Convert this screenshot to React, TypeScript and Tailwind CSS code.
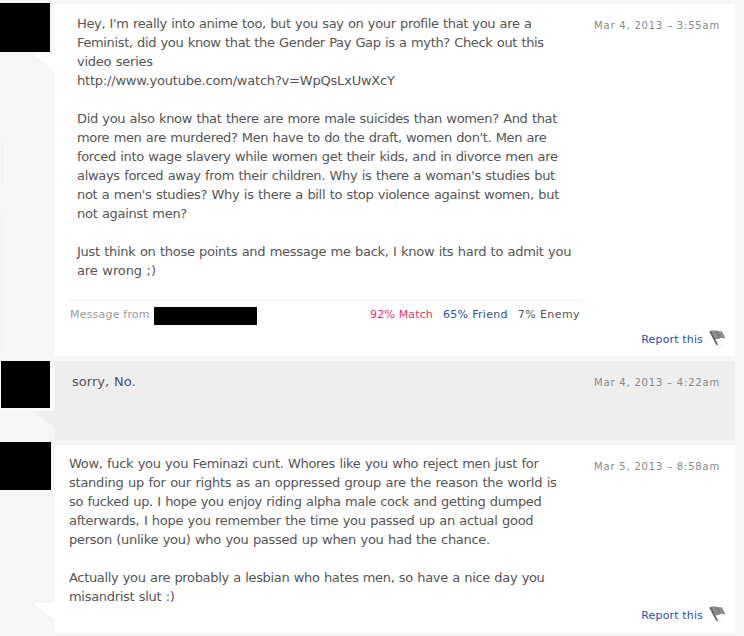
import type { ReactNode } from "react";

function Line({ children, className = "" }: { children?: ReactNode; className?: string }) {
  return <div className={`h-[19px] whitespace-pre [word-spacing:0.6px] ${className}`}>{children}</div>;
}

function Flag() {
  return (
    <svg className="block" width="17" height="16" viewBox="0 0 17 16" aria-hidden="true">
      <ellipse cx="9" cy="14.9" rx="4" ry="0.7" fill="#ececec" />
      <path d="M.8 1.2L3 .4L6.5 .5L9.5 1.3L13 1.2L16.5 8.2L14 8.3L11.5 7.8L8.8 9.2L5 9.2Z" fill="#8e8e8e" />
      <path d="M6 .5L9.5 1.3L12 7.9L9.5 8.8Z" fill="#818181" />
      <path d="M.2 1.6L2 1L9.1 14.4L7.3 15Z" fill="#666" />
    </svg>
  );
}

function Tail({ className }: { className: string }) {
  return (
    <svg className={`absolute left-[33px] ${className}`} width="22" height="17" viewBox="0 0 22 17" aria-hidden="true">
      <path d="M0 0H22V17Z" fill="currentColor" />
    </svg>
  );
}

function Report() {
  return (
    <div className="flex h-4 items-center justify-end gap-[6px] text-[11px] text-[#2b50a8]">
      <a className="pt-[2px] tracking-[0.15px]">Report this</a>
      <Flag />
    </div>
  );
}

function Stamp({ children }: { children: ReactNode }) {
  return <time className="block whitespace-nowrap text-right text-[10px] leading-4 tracking-[0.8px] text-[#888]">{children}</time>;
}

export default function App() {
  return (
    <main className="flex h-[636px] w-[744px] flex-col gap-[5px] overflow-hidden bg-[#f6f6f6] pt-1 font-['DejaVu_Sans',Verdana,sans-serif] text-[13px] leading-[19px] text-[#555]">
      <section className="flex h-[352px]">
        <div className="relative w-[55px] shrink-0">
          <div className="-mt-px h-[51px] bg-[#f8f8f8]">
            <div className="h-[49px] w-[50px] bg-black" />
          </div>
          <div className="ml-[2px] mt-[89px] h-10 w-px bg-[#eeeeee]" />
          <div className="ml-px mt-8 h-[137px] w-px bg-[#f0f0f0]" />
          <Tail className="top-[50px] text-white" />
        </div>
        <div className="flex w-[680px] justify-between bg-white">
          <div className="ml-[15px] w-[510px] shrink-0 pt-[10px]">
            <div className="h-[287px] border-b border-[#ececec] pl-[7px]">
              <Line className="tracking-[-0.355px]">Hey, I'm really into anime too, but you say on your profile that you are a</Line>
              <Line className="tracking-[-0.355px]">Feminist, did you know that the Gender Pay Gap is a myth? Check out this</Line>
              <Line className="tracking-[-0.24px]">video series</Line>
              <Line className="tracking-[-0.2px]">http://www.youtube.com/watch?v=WpQsLxUwXcY</Line>
              <Line />
              <Line className="tracking-[-0.33px]">Did you also know that there are more male suicides than women? And that</Line>
              <Line className="tracking-[-0.355px]">more men are murdered? Men have to do the draft, women don't. Men are</Line>
              <Line className="tracking-[-0.35px]">forced into wage slavery while women get their kids, and in divorce men are</Line>
              <Line className="tracking-[-0.315px]">always forced away from their children. Why is there a woman's studies but</Line>
              <Line className="tracking-[-0.31px]">not a men's studies? Why is there a bill to stop violence against women, but</Line>
              <Line className="tracking-[-0.28px]">not against men?</Line>
              <Line />
              <Line className="tracking-[-0.29px]">Just think on those points and message me back, I know its hard to admit you</Line>
              <Line className="tracking-[-0.1px]">are wrong ;)</Line>
            </div>
            <div className="flex items-start pt-1 text-[11px]">
              <span className="tracking-[0.2px] text-[#999]">Message from</span>
              <div className="ml-1 mt-[2px] h-[18px] w-[103px] bg-black" />
              <div className="ml-auto flex gap-[10px]">
                <span className="tracking-[0.15px] text-[#f0306a]">92% Match</span>
                <span className="tracking-[0.3px] text-[#2b50a8]">65% Friend</span>
                <span className="tracking-[0.42px]">7% Enemy</span>
              </div>
            </div>
          </div>
          <div className="flex flex-col justify-between pb-[10px] pt-[14px]">
            <div className="pr-[15px]"><Stamp>Mar 4, 2013 – 3:55am</Stamp></div>
            <div className="pr-[9px]"><Report /></div>
          </div>
        </div>
      </section>

      <section className="flex h-[79px]">
        <div className="relative w-[55px] shrink-0">
          <div className="h-[50px] bg-[#f9f9f9] pl-px">
            <div className="h-[47px] w-[49px] bg-black" />
          </div>
          <Tail className="top-[50px] text-[#eeeeee]" />
        </div>
        <div className="flex w-[680px] justify-between bg-[#eeeeee] pl-[17px] pr-[15px] pt-[11px]">
          <Line className="tracking-[0.04px]">sorry, <span className="text-[#4a4a78]">No.</span></Line>
          <div className="pt-[3px]"><Stamp>Mar 4, 2013 – 4:22am</Stamp></div>
        </div>
      </section>

      <section className="flex h-[188px]">
        <div className="relative w-[55px] shrink-0">
          <div className="-mt-[3px] h-12 w-[51px] bg-black" />
          <Tail className="top-[158px] text-white" />
        </div>
        <div className="flex w-[680px] justify-between bg-white">
          <div className="pl-[14px] pt-[9px]">
            <Line className="tracking-[-0.305px]">Wow, fuck you you Feminazi cunt. Whores like you who reject men just for</Line>
            <Line className="tracking-[-0.24px]">standing up for our rights as an oppressed group are the reason the world is</Line>
            <Line className="tracking-[-0.325px]">so fucked up. I hope you enjoy riding alpha male cock and getting dumped</Line>
            <Line className="tracking-[-0.29px]">afterwards, I hope you remember the time you passed up an actual good</Line>
            <Line className="tracking-[-0.28px]">person (unlike you) who you passed up when you had the chance.</Line>
            <Line />
            <Line className="tracking-[-0.335px]">Actually you are probably a lesbian who hates men, so have a nice day you</Line>
            <Line className="tracking-[-0.3px]">misandrist slut :)</Line>
          </div>
          <div className="flex flex-col justify-between pb-[11px] pt-[14px]">
            <div className="pr-[15px]"><Stamp>Mar 5, 2013 – 8:58am</Stamp></div>
            <div className="pr-[9px]"><Report /></div>
          </div>
        </div>
      </section>
    </main>
  );
}
